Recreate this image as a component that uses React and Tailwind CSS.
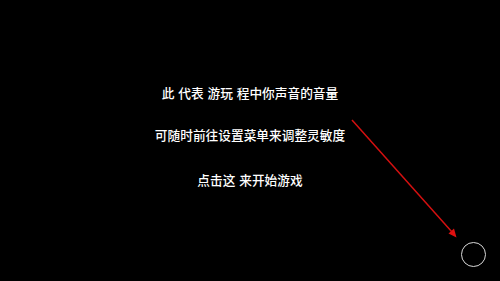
export default function App() {
  return (
    <div
      className="relative w-[500px] h-[281px] bg-black overflow-hidden text-white"
      style={{ fontFamily: '"Noto Sans CJK SC", "Noto Sans", sans-serif' }}
    >
      <div className="flex flex-col items-center pt-[85px] text-[12.7px] font-medium leading-[16px] [word-spacing:1px]">
        <p className="whitespace-pre">此 代表 游玩 程中你声音的音量</p>
        <p className="mt-[26px]">可随时前往设置菜单来调整灵敏度</p>
        <p className="mt-[29px] whitespace-pre">点击这 来开始游戏</p>
      </div>

      {/* pointer arrow */}
      <svg className="absolute inset-0" width="500" height="281" viewBox="0 0 500 281">
        <line x1="352" y1="120" x2="452" y2="232" stroke="#d41010" strokeWidth="1.5" />
        <polygon points="456.5,237.5 448.5,233.5 454,228.5" fill="#e01010" />
      </svg>

      <div className="absolute left-[461px] top-[242px] w-[25px] h-[25px] rounded-full border-[1.5px] border-[#d8d8d8]" />
    </div>
  );
}
